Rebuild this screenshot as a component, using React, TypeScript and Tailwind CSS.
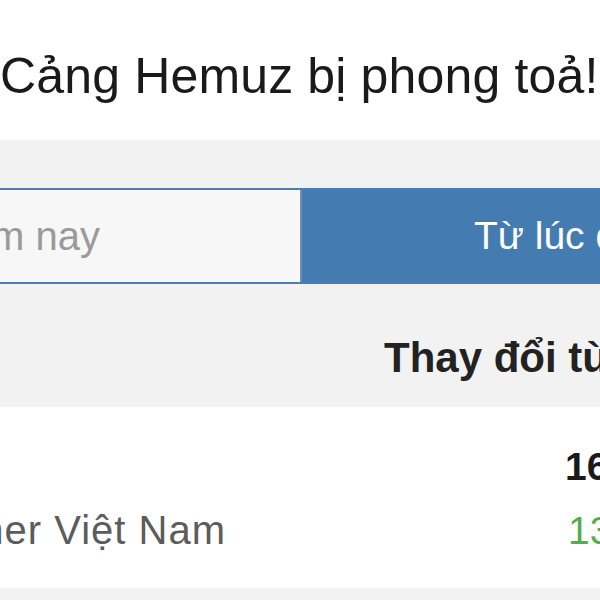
import React from 'react';

const App = () => {
  return (
    <div className="w-[600px] h-[600px] overflow-hidden bg-white font-['Liberation_Sans',Arial,sans-serif]">
      <h1 className="pt-[51px] pb-[39px] text-[50px] leading-[50px] font-normal tracking-[0.15px] text-[#1a1a1a] whitespace-nowrap">
        Cảng Hemuz bị phong toả!
      </h1>

      {/* Tabs + table header */}
      <section className="bg-[#f2f2f2] pt-[48px]">
        <div className="flex h-[96px] border-y-2 border-[#4a7db1]">
          <div className="w-[302px] shrink-0 flex items-center justify-end pr-[200px] bg-[#f7f7f8] border-r-2 border-[#6f8fb2] text-[40px] leading-[40px] text-[#9a9a9a]">
            <span className="shrink-0 whitespace-nowrap">Hôm nay</span>
          </div>
          <div className="flex-1 min-w-0 overflow-hidden flex items-center pl-[172px] bg-[#447cb1] text-[39px] leading-[40px] text-white">
            <span className="shrink-0 whitespace-nowrap">Từ lúc đóng cửa</span>
          </div>
        </div>
        <div className="pt-[53px] pb-[28px] pl-[384px] text-[42px] leading-[42px] font-bold text-[#222222] whitespace-nowrap">
          Thay đổi từ hôm qua
        </div>
      </section>

      {/* Row */}
      <section className="bg-white pt-[40px] pb-[38px]">
        <div className="flex items-baseline">
          <div className="w-[565px] shrink-0" />
          <span className="text-[39px] leading-[39px] font-bold text-[#1a1a1a] whitespace-nowrap">16,5%</span>
        </div>
        <div className="mt-[25px] flex items-baseline">
          <div className="w-[226px] shrink-0 flex justify-end text-[40px] leading-[39px] tracking-[1px] text-[#5c5c5c]">
            <span className="shrink-0 whitespace-nowrap">Fisher Việt Nam</span>
          </div>
          <span className="ml-[342px] text-[39px] leading-[39px] text-[#4fae4a] whitespace-nowrap">13,2%</span>
        </div>
      </section>

      <section className="bg-[#f2f2f2] h-[12px]" />
    </div>
  );
};

export default App;
